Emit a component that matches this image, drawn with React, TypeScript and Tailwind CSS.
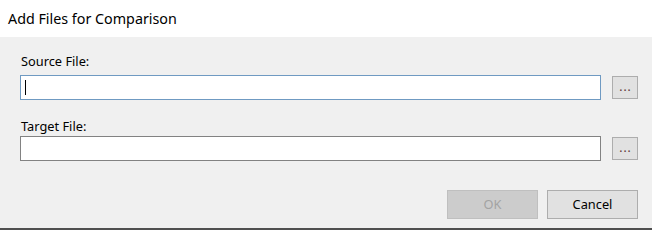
import React from "react";

const font = { fontFamily: '"Noto Sans", "Open Sans", sans-serif' };

const BrowseButton = () => (
  <button className="w-[26px] h-[23px] bg-[#e1e1e1] border border-[#adadad] flex items-center justify-center text-[12px] leading-none tracking-[1px] text-[#5e3535] pb-[2px] pl-[1px]">
    ...
  </button>
);

const App = () => {
  return (
    <div
      className="w-[652px] h-[230px] bg-[#f0f0f0] flex flex-col border-b-2 border-[#4f4f4f] overflow-hidden"
      style={font}
    >
      <div className="h-[37px] bg-white flex items-center pl-[8px] text-[14.3px] text-black">
        Add Files for Comparison
      </div>

      <div className="flex flex-col pl-[20px] pr-[14px] pt-[16px]">
        <div className="text-[12.8px] leading-[16px] text-black mb-[6px] pl-px">
          Source File:
        </div>
        <div className="flex items-center gap-[11px]">
          <div className="w-[581px] h-[25px] bg-white border border-[#6f9ac2] flex items-center pl-[4px]">
            <div className="w-px h-[15px] bg-black" />
          </div>
          <BrowseButton />
        </div>

        <div className="text-[12.8px] leading-[16px] text-black mt-[18px] mb-[2px] pl-px">
          Target File:
        </div>
        <div className="flex items-center gap-[11px]">
          <div className="w-[581px] h-[25px] bg-white border border-[#828282]" />
          <BrowseButton />
        </div>

        <div className="flex justify-end gap-[9px] mt-[29px]">
          <button className="w-[91px] h-[29px] bg-[#cccccc] border border-[#bfbfbf] text-[12.8px] text-[#a3a3a3]">
            OK
          </button>
          <button className="w-[91px] h-[29px] bg-[#e1e1e1] border border-[#adadad] text-[12.8px] text-black">
            Cancel
          </button>
        </div>
      </div>
    </div>
  );
};

export default App;
